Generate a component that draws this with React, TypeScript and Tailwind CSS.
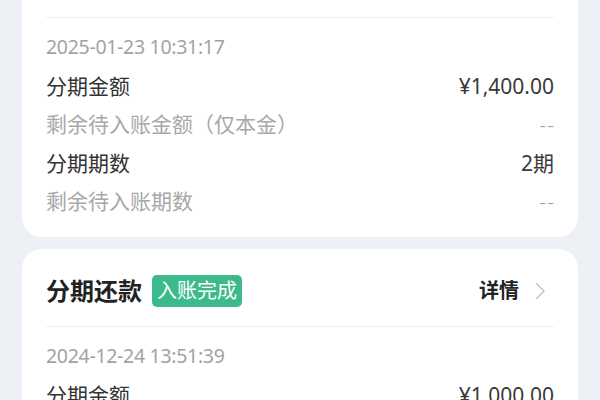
import React from 'react';

type Row = { label: string; value: string; muted?: boolean };

interface Record {
  title: string;
  status: string;
  statusClass: string;
  time: string;
  rows: Row[];
}

const records: Record[] = [
  {
    title: '分期还款',
    status: '入账中',
    statusClass: 'bg-[#e3f7f3] text-[#2fb08a]',
    time: '2025-01-23 10:31:17',
    rows: [
      { label: '分期金额', value: '¥1,400.00' },
      { label: '剩余待入账金额（仅本金）', value: '--', muted: true },
      { label: '分期期数', value: '2期' },
      { label: '剩余待入账期数', value: '--', muted: true },
    ],
  },
  {
    title: '分期还款',
    status: '入账完成',
    statusClass: 'bg-[#3dba8b] text-white',
    time: '2024-12-24 13:51:39',
    rows: [
      { label: '分期金额', value: '¥1,000.00' },
      { label: '剩余待入账金额（仅本金）', value: '--', muted: true },
      { label: '分期期数', value: '2期' },
      { label: '剩余待入账期数', value: '--', muted: true },
    ],
  },
];

const RecordCard: React.FC<{ record: Record }> = ({ record }) => {
  return (
    <div className="bg-white rounded-[20px] px-6 pb-[16px] shrink-0">
      {/* header */}
      <div className="flex items-center justify-between pt-[26px] pb-[19px]">
        <div className="flex items-center gap-[10px]">
          <span className="text-[24px] leading-[32px] font-bold text-[#222]">{record.title}</span>
          <span className={`h-[32px] px-[5px] rounded-[5px] text-[20px] leading-[32px] ${record.statusClass}`}>
            {record.status}
          </span>
        </div>
        <div className="flex items-center gap-[16px] mr-[8px]">
          <span className="text-[20px] font-semibold text-[#222]">详情</span>
          <svg width="11" height="18" viewBox="0 0 11 18" fill="none">
            <path d="M1.5 1.5L9 9L1.5 16.5" stroke="#c6c6c6" strokeWidth="1.6" strokeLinecap="round" strokeLinejoin="round" />
          </svg>
        </div>
      </div>
      <div className="h-px bg-[#efefef]" />
      <div className="pt-[8px]">
        <div className="h-[41px] flex items-center text-[19.5px] text-[#a3a3a3] tracking-[-0.3px]">{record.time}</div>
        {record.rows.map((row) => (
          <div key={row.label} className="h-[38.5px] flex items-center justify-between">
            <span className={`text-[21px] ${row.muted ? 'text-[#a8a8a8]' : 'text-[#333]'}`}>{row.label}</span>
            <span
              className={
                row.muted
                  ? 'text-[20px] font-light tracking-[1.5px] -mr-[1.5px] text-[#a0a0a0]'
                  : 'text-[21px] text-[#3a3a3a]'
              }
            >
              {row.value}
            </span>
          </div>
        ))}
      </div>
    </div>
  );
};

export default function App() {
  return (
    <div
      className="w-[600px] h-[400px] overflow-hidden bg-[#edf0f4]"
      style={{ fontFamily: '"Noto Sans", "Noto Sans CJK SC", sans-serif' }}
    >
      <div className="flex flex-col gap-3 px-[22px] -mt-[60px]">
        {records.map((r, i) => (
          <RecordCard key={i} record={r} />
        ))}
      </div>
    </div>
  );
}
